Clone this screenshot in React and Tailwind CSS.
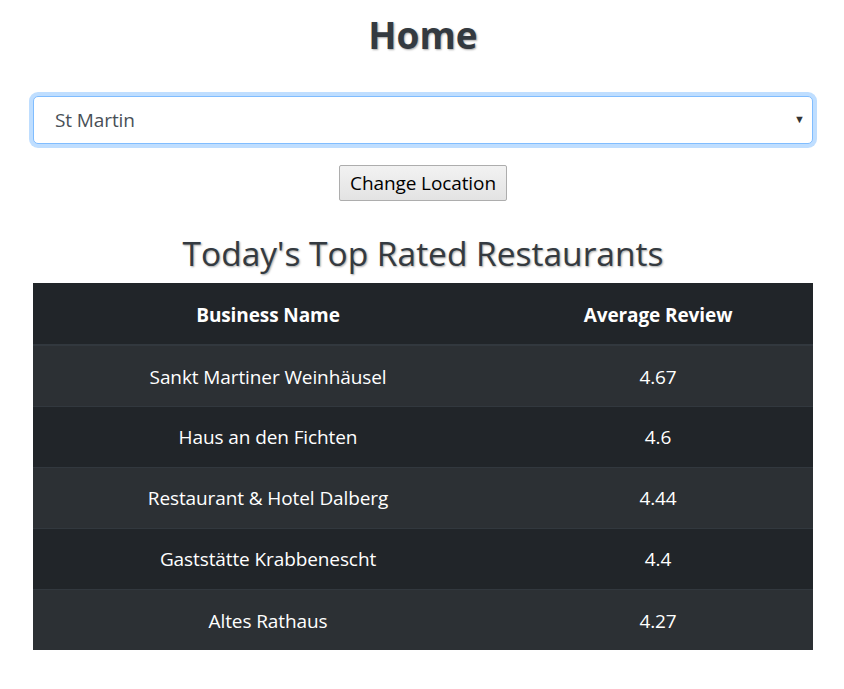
import React from 'react';

const restaurants = [
  { name: 'Sankt Martiner Weinhäusel', rating: '4.67' },
  { name: 'Haus an den Fichten', rating: '4.6' },
  { name: 'Restaurant & Hotel Dalberg', rating: '4.44' },
  { name: 'Gaststätte Krabbenescht', rating: '4.4' },
  { name: 'Altes Rathaus', rating: '4.27' },
];

const App = () => {
  return (
    <div className="min-h-screen bg-white text-[#212529] font-['Open_Sans',sans-serif]">
      <div className="w-[780px] ml-[33px]">
        {/* Header */}
        <h1 className="pt-[12px] text-center text-[37px] leading-[46px] font-bold text-[#343a40] [text-shadow:1px_1px_2px_rgba(0,0,0,0.35)]">
          Home
        </h1>

        {/* Location picker */}
        <div className="mt-[38px] relative">
          <select
            defaultValue="St Martin"
            className="w-full h-[48px] pl-[21px] pr-10 text-[19px] tracking-[-0.1px] text-[#495057] bg-white border border-[#80bdff] rounded-[5px] shadow-[0_0_0_4px_#bfdeff] appearance-none outline-none"
          >
            <option>St Martin</option>
          </select>
          <span className="absolute right-[8px] top-[15px] text-[11px] text-[#333] pointer-events-none">▼</span>
        </div>

        <div className="mt-[21px] flex justify-center">
          <button className="w-[168px] h-[36px] text-[19px] tracking-[-0.1px] leading-none text-black border border-[#adadad] rounded-[2px] bg-gradient-to-b from-[#f2f2f2] to-[#e3e3e3]">
            Change Location
          </button>
        </div>

        {/* Restaurants */}
        <h2 className="mt-[29px] mb-[7px] text-center text-[33.5px] leading-[46px] font-medium text-[#343a40] [text-shadow:1px_1px_2px_rgba(0,0,0,0.35)]">
          Today's Top Rated Restaurants
        </h2>

        <table className="w-full border-collapse text-[19px] tracking-[-0.1px] text-white bg-[#212529]">
          <thead>
            <tr className="border-b-2 border-[#32383e]">
              <th className="w-[470px] h-[62px] pt-[3px] text-center font-bold">Business Name</th>
              <th className="h-[62px] pt-[3px] text-center font-bold">Average Review</th>
            </tr>
          </thead>
          <tbody>
            {restaurants.map((r, i) => (
              <tr key={r.name} className={`border-t border-[#32383e] ${i % 2 === 0 ? 'bg-[#2c3034]' : 'bg-[#212529]'}`}>
                <td className="h-[61px] pt-[2px] text-center">{r.name}</td>
                <td className="h-[61px] pt-[2px] text-center">{r.rating}</td>
              </tr>
            ))}
          </tbody>
        </table>
      </div>
    </div>
  );
};

export default App;
